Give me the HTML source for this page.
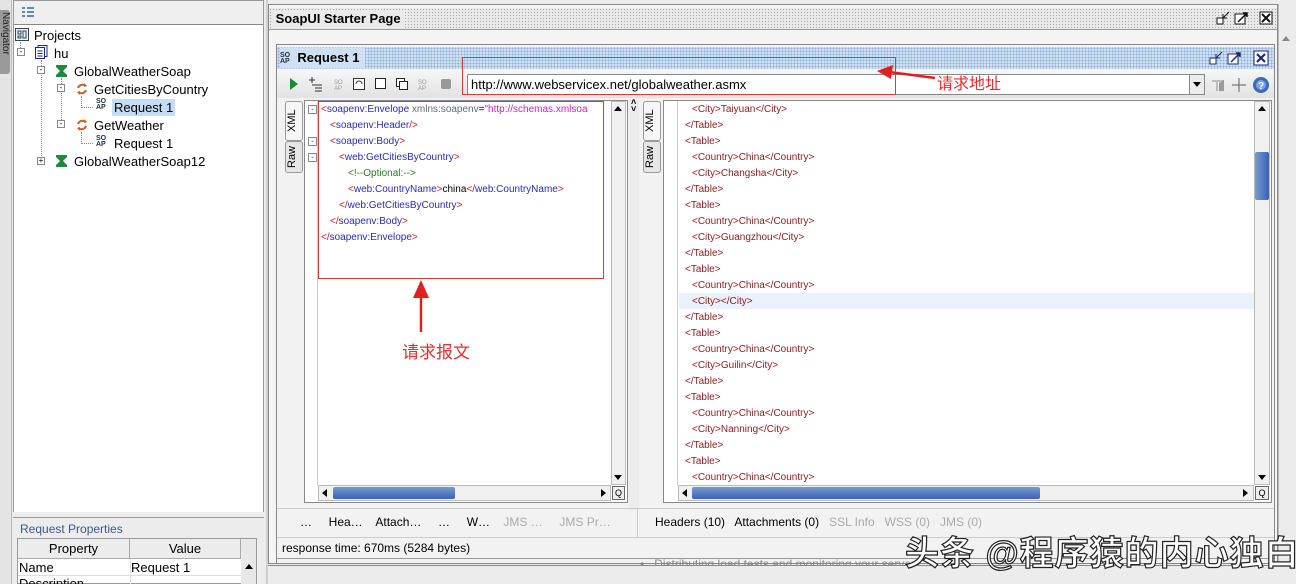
<!DOCTYPE html>
<html><head><meta charset="utf-8">
<style>
*{margin:0;padding:0;box-sizing:border-box}
html,body{width:1296px;height:584px;overflow:hidden}
body{background:#ececec;font-family:"Liberation Sans","Noto Sans CJK SC",sans-serif;font-size:12px;color:#000;position:relative}
.a{position:absolute}
.dots{background-color:#eaeaea;background-image:radial-gradient(#a8a8a8 0.7px,transparent 0.8px);background-size:3px 3px}
.bdots{background-color:#cfe0f3;background-image:radial-gradient(#8fb0d8 0.8px,transparent 0.9px);background-size:3px 3px}
.t{position:absolute;white-space:nowrap;font-size:13px}
.x{position:absolute;white-space:nowrap;font-size:10px;font-family:"Liberation Sans",sans-serif}
.r{color:#8b1a1a}
.tag{color:#2a2ab8}.br{color:#c81e1e}.at{color:#5b6b7b}.st{color:#d020c0}.cm{color:#208020}
.gray{color:#aaa}
.vt{position:absolute;writing-mode:vertical-rl;transform:rotate(180deg);font-size:11px;text-align:center;background:#e6e6e6;border:1px solid #999;border-radius:3px}
.sb{position:absolute;background:#f0f0f0;border:1px solid #bbb}
</style></head><body>

<div class="a" style="left:0;top:0;width:12px;height:584px;background:#e4e4e4;border-right:1px solid #bbb"></div>
<div class="a" style="left:0;top:10px;width:10px;height:64px;background:#9a9a9a;border-radius:0 3px 3px 0;color:#222;font-size:10px;writing-mode:vertical-rl;line-height:10px;padding-top:2px">Navigator</div>

<div class="a" style="left:13px;top:0;width:251px;height:512px;border:1px solid #999;background:#ececec"></div>
<div class="a" style="left:14px;top:1px;width:249px;height:23px;background:#efefef"></div>
<svg class="a" style="left:22px;top:7px" width="12" height="10"><path d="M0 1h3M5 1h7M0 5h3M5 5h7M0 9h3M5 9h7" stroke="#2a6ab0" stroke-width="1.5"/></svg>
<div class="a" style="left:14px;top:24px;width:249px;height:488px;background:#fff;border-top:1px solid #888"></div>
<div class="a" style="left:20px;top:42px;height:10px;border-left:1px dotted #888"></div>
<div class="a" style="left:41px;top:60px;height:102px;border-left:1px dotted #888"></div>
<div class="a" style="left:61px;top:78px;height:48px;border-left:1px dotted #888"></div>
<div class="a" style="left:81px;top:96px;height:12px;border-left:1px dotted #888"></div>
<div class="a" style="left:81px;top:107px;width:12px;border-top:1px dotted #888"></div>
<div class="a" style="left:81px;top:132px;height:12px;border-left:1px dotted #888"></div>
<div class="a" style="left:81px;top:143px;width:12px;border-top:1px dotted #888"></div>
<svg class="a" style="left:15px;top:28px" width="14" height="13"><rect x="0.5" y="0.5" width="13" height="12" fill="#e8f0f4" stroke="#345"/><rect x="3" y="3" width="3" height="3" fill="none" stroke="#345"/><rect x="3" y="8" width="3" height="2" fill="none" stroke="#345"/><rect x="8" y="3" width="3" height="7" fill="none" stroke="#345"/></svg>
<div class="t" style="left:34px;top:28px">Projects</div>
<div class="a" style="left:17px;top:48px;width:8px;height:8px;border:1px solid #888;background:#fff;font-size:8px;line-height:6px;text-align:center">-</div>
<svg class="a" style="left:35px;top:45px" width="13" height="14"><rect x="3" y="0.5" width="9" height="11" fill="#fff" stroke="#1a2a7a"/><rect x="0.5" y="2.5" width="9" height="11" fill="#fff" stroke="#1a2a7a"/><path d="M2.5 6h5M2.5 8.5h5M2.5 11h5" stroke="#1a2a7a"/></svg>
<div class="t" style="left:54px;top:46px">hu</div>
<div class="a" style="left:37px;top:66px;width:8px;height:8px;border:1px solid #888;background:#fff;font-size:8px;line-height:6px;text-align:center">-</div>
<svg class="a" style="left:56px;top:64px" width="11" height="14"><path d="M0 1h11v2L7 7l4 4v2H0v-2l4-4L0 3z" fill="#1e8a3c"/></svg>
<div class="t" style="left:74px;top:64px">GlobalWeatherSoap</div>
<div class="a" style="left:57px;top:84px;width:8px;height:8px;border:1px solid #888;background:#fff;font-size:8px;line-height:6px;text-align:center">-</div>
<svg class="a" style="left:75px;top:82px" width="14" height="14"><path d="M3 6a5 5 0 0 1 8-2M11 8a5 5 0 0 1-8 2" stroke="#c86420" stroke-width="2" fill="none"/><path d="M9 1l3 3-3 1zM5 13l-3-3 3-1z" fill="#c86420"/></svg>
<div class="t" style="left:94px;top:82px">GetCitiesByCountry</div>
<div class="x" style="left:96px;top:99px;font-size:7px;line-height:6px;color:#234;font-weight:bold">SO<br>AP</div>
<div class="a" style="left:112px;top:99px;width:63px;height:17px;background:#c4dcf4"></div>
<div class="t" style="left:114px;top:100px">Request 1</div>
<div class="a" style="left:57px;top:120px;width:8px;height:8px;border:1px solid #888;background:#fff;font-size:8px;line-height:6px;text-align:center">-</div>
<svg class="a" style="left:75px;top:118px" width="14" height="14"><path d="M3 6a5 5 0 0 1 8-2M11 8a5 5 0 0 1-8 2" stroke="#c86420" stroke-width="2" fill="none"/><path d="M9 1l3 3-3 1zM5 13l-3-3 3-1z" fill="#c86420"/></svg>
<div class="t" style="left:94px;top:118px">GetWeather</div>
<div class="x" style="left:96px;top:136px;font-size:7px;line-height:6px;color:#234;font-weight:bold">SO<br>AP</div>
<div class="t" style="left:114px;top:136px">Request 1</div>
<div class="a" style="left:37px;top:157px;width:8px;height:8px;border:1px solid #888;background:#fff;font-size:8px;line-height:6px;text-align:center">+</div>
<svg class="a" style="left:56px;top:154px" width="11" height="14"><path d="M0 1h11v2L7 7l4 4v2H0v-2l4-4L0 3z" fill="#1e8a3c"/></svg>
<div class="t" style="left:74px;top:154px">GlobalWeatherSoap12</div>

<div class="a" style="left:13px;top:517px;width:251px;height:67px;border-top:1px solid #999"></div>
<div class="t" style="left:20px;top:522px;font-size:12px;color:#3a5a8a">Request Properties</div>
<div class="a" style="left:17px;top:538px;width:240px;height:46px;border:1px solid #999;background:#fff"></div>
<div class="a" style="left:18px;top:539px;width:112px;height:20px;background:#ececec;border-right:1px solid #aaa;border-bottom:1px solid #aaa;text-align:center;font-size:13px;line-height:20px">Property</div>
<div class="a" style="left:130px;top:539px;width:111px;height:20px;background:#ececec;border-right:1px solid #aaa;border-bottom:1px solid #aaa;text-align:center;font-size:13px;line-height:20px">Value</div>
<div class="a" style="left:241px;top:539px;width:15px;height:45px;background:#e8e8e8"></div>
<div class="t" style="left:19px;top:560px">Name</div>
<div class="t" style="left:131px;top:560px">Request 1</div>
<div class="t" style="left:19px;top:576px">Description</div>
<div class="a" style="left:130px;top:559px;height:25px;border-left:1px solid #ddd"></div>
<div class="a" style="left:18px;top:575px;width:223px;border-top:1px solid #ddd"></div>
<div class="a" style="left:245px;top:564px;border:4px solid transparent;border-bottom:5px solid #000;border-top:none"></div>

<div class="a" style="left:266px;top:0;width:2px;height:584px;background:#d0d0d0"></div>
<div class="a" style="left:268px;top:4px;width:1010px;height:560px;border:1px solid #888;background:#f4f4f4"></div>
<div class="a dots" style="left:269px;top:8px;width:1008px;height:22px;border-bottom:1px solid #999"></div>
<div class="a" style="left:272px;top:10px;background:#eaeaea;padding-right:4px;font-weight:bold;font-size:13px;line-height:18px">&nbsp;SoapUI Starter Page</div>
<svg class="a" style="left:1215px;top:10px" width="60" height="16"><rect x="2" y="8" width="6" height="6" fill="#fff" stroke="#111"/><path d="M8 8l6-6M8 8h4M8 8v-4" stroke="#111"/><rect x="20" y="4" width="10" height="10" fill="#fff" stroke="#111"/><path d="M23 12l9-9M28 3h4v4" stroke="#111" stroke-width="1.5"/><rect x="45" y="2" width="12" height="12" fill="#fff" stroke="#111"/><path d="M47 4l8 8M55 4l-8 8" stroke="#111" stroke-width="2"/></svg>
<div class="a" style="left:1278px;top:4px;width:18px;height:560px;background:#ececec;border-left:1px solid #bbb"></div>
<div class="a" style="left:1282px;top:36px;border:4px solid transparent;border-bottom:5px solid #888;border-top:none"></div>

<div class="a" style="left:276px;top:44px;width:999px;height:520px;border:1px solid #888;background:#f2f2f2"></div>
<div class="a bdots" style="left:277px;top:47px;width:997px;height:22px"></div>
<div class="a" style="left:280px;top:48px;background:#cfe0f3;padding-right:6px;height:20px;font-weight:bold;font-size:13px;line-height:20px"><span style="font-size:7px;line-height:6px;display:inline-block;vertical-align:middle;color:#234;font-weight:bold">SO<br>AP</span>&nbsp; Request 1</div>
<svg class="a" style="left:1208px;top:49px" width="64" height="18"><rect x="2" y="9" width="6" height="6" fill="#fff" stroke="#1a2a6a"/><path d="M8 9l6-6M8 9h4M8 9v-4" stroke="#1a2a6a"/><rect x="20" y="5" width="10" height="10" fill="#fff" stroke="#1a2a6a"/><path d="M23 13l9-9M28 4h4v4" stroke="#1a2a6a" stroke-width="1.5"/><rect x="46" y="2" width="14" height="14" fill="#fff" stroke="#1a2a6a"/><path d="M49 5l8 8M57 5l-8 8" stroke="#1a2a6a" stroke-width="2.2"/></svg>

<div class="a" style="left:277px;top:70px;width:997px;height:28px;background:linear-gradient(#f6f6f6,#e2e2e2)"></div>
<svg class="a" style="left:288px;top:76px" width="170" height="16"><path d="M2 2l8 6-8 6z" fill="#1a8a2a"/><path d="M21 4h6M24 1v6M24 9h10M27 12h7M27 15h7" stroke="#333"/><text x="46" y="8" font-size="6" fill="#999" font-family="Liberation Sans">SO</text><text x="46" y="14" font-size="6" fill="#999" font-family="Liberation Sans">AP</text><rect x="65.5" y="2.5" width="11" height="11" fill="#fff" stroke="#333"/><path d="M68 8a3 3 0 0 1 6 0" stroke="#333" fill="none"/><rect x="87.5" y="2.5" width="10" height="10" fill="#fff" stroke="#222"/><rect x="108.5" y="2.5" width="8" height="8" fill="#fff" stroke="#222"/><rect x="111.5" y="5.5" width="8" height="8" fill="#fff" stroke="#222"/><text x="130" y="8" font-size="6" fill="#999" font-family="Liberation Sans">SO</text><text x="130" y="14" font-size="6" fill="#999" font-family="Liberation Sans">AP</text><rect x="153" y="3" width="10" height="10" rx="2" fill="#999"/></svg>
<div class="a" style="left:467px;top:74px;width:738px;height:21px;background:#fff;border:1px solid #888;border-radius:2px"></div>
<div class="t" style="left:471px;top:77px">http://www.webservicex.net/globalweather.asmx</div>
<div class="a" style="left:1189px;top:74px;width:16px;height:21px;border:1px solid #888;background:#ececec"></div>
<div class="a" style="left:1193px;top:82px;border:4px solid transparent;border-top:5px solid #000;border-bottom:none"></div>
<svg class="a" style="left:1209px;top:74px" width="64" height="22"><path d="M3 6h12v2h-6v9H7V8H3z" fill="#bbb"/><path d="M10 9l5-3v11h-5z" fill="#999"/><path d="M30 4v14M23 11h14" stroke="#777" stroke-width="1.2"/><circle cx="52" cy="11" r="8" fill="#3a6ab8"/><circle cx="52" cy="11" r="5" fill="#7aa4e0"/><text x="49" y="15" font-size="10" fill="#fff" font-weight="bold" font-family="Liberation Sans">?</text></svg>

<div class="vt" style="left:285px;top:101px;width:18px;height:40px;background:#f6f6f6">XML</div>
<div class="vt" style="left:285px;top:141px;width:18px;height:32px">Raw</div>
<div class="a" style="left:304px;top:100px;width:324px;height:403px;border:1px solid #888;background:#fff"></div>
<div class="a" style="left:305px;top:101px;width:13px;height:384px;background:#fff;border-right:1px solid #ccc"></div>
<div class="a" style="left:308px;top:105px;width:9px;height:9px;border:1px solid #888;font-size:9px;line-height:6px;text-align:center;color:#555">-</div>
<div class="a" style="left:308px;top:137px;width:9px;height:9px;border:1px solid #888;font-size:9px;line-height:6px;text-align:center;color:#555">-</div>
<div class="a" style="left:308px;top:153px;width:9px;height:9px;border:1px solid #888;font-size:9px;line-height:6px;text-align:center;color:#555">-</div>
<div class="x" style="left:321px;top:104px"><span class="br">&lt;</span><span class="tag">soapenv:Envelope</span> <span class="at">xmlns:soapenv</span>=<span class="st">"http://schemas.xmlsoa</span></div>
<div class="x" style="left:330px;top:120px"><span class="br">&lt;</span><span class="tag">soapenv:Header</span><span class="br">/&gt;</span></div>
<div class="x" style="left:330px;top:136px"><span class="br">&lt;</span><span class="tag">soapenv:Body</span><span class="br">&gt;</span></div>
<div class="x" style="left:339px;top:152px"><span class="br">&lt;</span><span class="tag">web:GetCitiesByCountry</span><span class="br">&gt;</span></div>
<div class="x cm" style="left:348px;top:168px">&lt;!--Optional:--&gt;</div>
<div class="x" style="left:348px;top:184px"><span class="br">&lt;</span><span class="tag">web:CountryName</span><span class="br">&gt;</span>china<span class="br">&lt;/</span><span class="tag">web:CountryName</span><span class="br">&gt;</span></div>
<div class="x" style="left:339px;top:200px"><span class="br">&lt;/</span><span class="tag">web:GetCitiesByCountry</span><span class="br">&gt;</span></div>
<div class="x" style="left:330px;top:216px"><span class="br">&lt;/</span><span class="tag">soapenv:Body</span><span class="br">&gt;</span></div>
<div class="x" style="left:321px;top:232px"><span class="br">&lt;/</span><span class="tag">soapenv:Envelope</span><span class="br">&gt;</span></div>
<div class="sb" style="left:611px;top:101px;width:15px;height:384px"></div>
<div class="a" style="left:614px;top:106px;border:4px solid transparent;border-bottom:5px solid #000;border-top:none"></div>
<div class="a" style="left:614px;top:475px;border:4px solid transparent;border-top:5px solid #000;border-bottom:none"></div>
<div class="sb" style="left:318px;top:485px;width:293px;height:16px"></div>
<div class="a" style="left:333px;top:487px;width:122px;height:12px;background:linear-gradient(#7a9ad0,#3a62b0);border-radius:2px"></div>
<div class="a" style="left:322px;top:489px;border:4px solid transparent;border-right:5px solid #000;border-left:none"></div>
<div class="a" style="left:601px;top:489px;border:4px solid transparent;border-left:5px solid #000;border-right:none"></div>
<div class="a" style="left:612px;top:486px;width:13px;height:14px;border:1px solid #666;background:#eee;font-size:9px;line-height:12px;text-align:center">Q</div>

<div class="a" style="left:629px;top:100px;width:10px;height:410px;background:#ececec"></div>
<div class="x" style="left:631px;top:99px;font-size:9px;line-height:7px;font-weight:bold">˄<br>˅</div>

<div class="vt" style="left:643px;top:101px;width:18px;height:40px;background:#f6f6f6">XML</div>
<div class="vt" style="left:643px;top:141px;width:18px;height:32px">Raw</div>
<div class="a" style="left:663px;top:100px;width:609px;height:403px;border:1px solid #888;background:#fff"></div>
<div class="a" style="left:664px;top:101px;width:14px;height:384px;border-right:1px solid #ccc"></div>
<div class="a" style="left:679px;top:293px;width:575px;height:16px;background:#eaf1fb"></div>
<div class="x r" style="left:692px;top:104px">&lt;City&gt;Taiyuan&lt;/City&gt;</div>
<div class="x r" style="left:685px;top:120px">&lt;/Table&gt;</div>
<div class="x r" style="left:685px;top:136px">&lt;Table&gt;</div>
<div class="x r" style="left:692px;top:152px">&lt;Country&gt;China&lt;/Country&gt;</div>
<div class="x r" style="left:692px;top:168px">&lt;City&gt;Changsha&lt;/City&gt;</div>
<div class="x r" style="left:685px;top:184px">&lt;/Table&gt;</div>
<div class="x r" style="left:685px;top:200px">&lt;Table&gt;</div>
<div class="x r" style="left:692px;top:216px">&lt;Country&gt;China&lt;/Country&gt;</div>
<div class="x r" style="left:692px;top:232px">&lt;City&gt;Guangzhou&lt;/City&gt;</div>
<div class="x r" style="left:685px;top:248px">&lt;/Table&gt;</div>
<div class="x r" style="left:685px;top:264px">&lt;Table&gt;</div>
<div class="x r" style="left:692px;top:280px">&lt;Country&gt;China&lt;/Country&gt;</div>
<div class="x r" style="left:692px;top:296px">&lt;City&gt;&lt;/City&gt;</div>
<div class="x r" style="left:685px;top:312px">&lt;/Table&gt;</div>
<div class="x r" style="left:685px;top:328px">&lt;Table&gt;</div>
<div class="x r" style="left:692px;top:344px">&lt;Country&gt;China&lt;/Country&gt;</div>
<div class="x r" style="left:692px;top:360px">&lt;City&gt;Guilin&lt;/City&gt;</div>
<div class="x r" style="left:685px;top:376px">&lt;/Table&gt;</div>
<div class="x r" style="left:685px;top:392px">&lt;Table&gt;</div>
<div class="x r" style="left:692px;top:408px">&lt;Country&gt;China&lt;/Country&gt;</div>
<div class="x r" style="left:692px;top:424px">&lt;City&gt;Nanning&lt;/City&gt;</div>
<div class="x r" style="left:685px;top:440px">&lt;/Table&gt;</div>
<div class="x r" style="left:685px;top:456px">&lt;Table&gt;</div>
<div class="x r" style="left:692px;top:472px">&lt;Country&gt;China&lt;/Country&gt;</div>
<div class="sb" style="left:1254px;top:101px;width:16px;height:384px"></div>
<div class="a" style="left:1255px;top:152px;width:14px;height:48px;background:linear-gradient(90deg,#7a9ad0,#3a62b0);border-radius:2px"></div>
<div class="a" style="left:1258px;top:106px;border:4px solid transparent;border-bottom:5px solid #000;border-top:none"></div>
<div class="a" style="left:1258px;top:475px;border:4px solid transparent;border-top:5px solid #000;border-bottom:none"></div>
<div class="sb" style="left:678px;top:485px;width:576px;height:16px"></div>
<div class="a" style="left:692px;top:487px;width:348px;height:12px;background:linear-gradient(#7a9ad0,#3a62b0);border-radius:2px"></div>
<div class="a" style="left:682px;top:489px;border:4px solid transparent;border-right:5px solid #000;border-left:none"></div>
<div class="a" style="left:1243px;top:489px;border:4px solid transparent;border-left:5px solid #000;border-right:none"></div>
<div class="a" style="left:1255px;top:486px;width:14px;height:14px;border:1px solid #666;background:#eee;font-size:9px;line-height:12px;text-align:center">Q</div>

<div class="a" style="left:277px;top:508px;width:997px;height:1px;background:#ccc"></div>
<div class="a" style="left:637px;top:508px;width:1px;height:30px;background:#ccc"></div>
<div class="t" style="left:300px;top:515px;font-size:12px">…&nbsp;&nbsp;&nbsp;&nbsp; Hea…&nbsp;&nbsp;&nbsp; Attach…&nbsp;&nbsp;&nbsp;&nbsp; …&nbsp;&nbsp;&nbsp;&nbsp; W…&nbsp;&nbsp;&nbsp; <span class="gray">JMS …&nbsp;&nbsp;&nbsp;&nbsp; JMS Pr…</span></div>
<div class="t" style="left:655px;top:515px;font-size:12px">Headers (10)&nbsp;&nbsp; Attachments (0)&nbsp;&nbsp; <span class="gray">SSL Info&nbsp;&nbsp; WSS (0)&nbsp;&nbsp; JMS (0)</span></div>
<div class="a" style="left:277px;top:537px;width:997px;height:1px;background:#ccc"></div>
<div class="t" style="left:282px;top:541px;font-size:12px">response time: 670ms (5284 bytes)</div>
<div class="a" style="left:277px;top:558px;width:997px;height:1px;background:#999"></div>
<div class="t" style="left:640px;top:557px;font-size:12px;color:#888">•&nbsp;&nbsp; Distributing load tests and monitoring your servers</div>
<div class="a" style="left:268px;top:565px;width:1010px;height:19px;background:#ececec;border-top:1px solid #888"></div>

<div class="a" style="left:462px;top:57px;width:434px;height:38px;border:1px solid #d83a3a"></div>
<div class="a" style="left:318px;top:101px;width:286px;height:178px;border:1px solid #d83a3a"></div>
<svg class="a" style="left:875px;top:62px" width="62" height="22"><path d="M60 16L14 10" stroke="#e02020" stroke-width="2.5"/><path d="M2 9l16-6-2 14z" fill="#e02020"/></svg>
<div class="t" style="left:937px;top:70px;font-size:16px;color:#e03030">请求地址</div>
<svg class="a" style="left:410px;top:278px" width="22" height="56"><path d="M11 54V14" stroke="#e02020" stroke-width="2.5"/><path d="M11 2l8 18H3z" fill="#e02020"/></svg>
<div class="t" style="left:402px;top:338px;font-size:17px;color:#e03030">请求报文</div>

<div class="t" style="left:905px;top:526px;font-size:34px;color:#fff;font-weight:bold;-webkit-text-stroke:1.2px #222;letter-spacing:1px">头条 @程序猿的内心独白</div>
</body></html>
